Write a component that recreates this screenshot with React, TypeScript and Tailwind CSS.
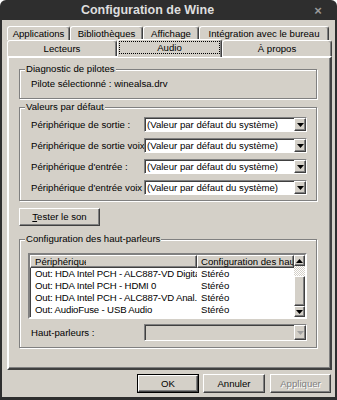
const raised =
  "border border-t-white border-l-white border-r-[#404040] border-b-[#404040] shadow-[inset_-1px_-1px_0_#808080]";
const sunken =
  "border border-t-[#808080] border-l-[#808080] border-r-white border-b-white shadow-[inset_1px_1px_0_#404040]";
const etched = "border border-[#808080] shadow-[inset_1px_1px_0_#fff,1px_1px_0_#fff]";
const tab =
  "h-full flex items-center justify-center whitespace-nowrap border-t border-l border-r border-t-white border-l-white border-r-[#404040] shadow-[inset_-1px_0_0_#808080] rounded-t-[3px]";

const Arrow = ({ up = false, color = "#000" }: { up?: boolean; color?: string }) => (
  <svg width="7" height="4" viewBox="0 0 7 4">
    <polygon points={up ? "0,4 7,4 3.5,0" : "0,0 7,0 3.5,4"} fill={color} />
  </svg>
);

const Combo = ({ disabled = false }: { disabled?: boolean }) => (
  <div
    className={`${sunken} flex items-stretch w-[163px] ${
      disabled ? "h-[17px] bg-[#d4d0c8]" : "h-[15px] bg-white"
    }`}
  >
    <div className="flex-1 pl-[2px] flex items-center whitespace-nowrap overflow-hidden">
      {disabled ? "" : "(Valeur par défaut du système)"}
    </div>
    <div className={`${raised} w-[12px] bg-[#d4d0c8] flex items-center justify-center`}>
      <Arrow color={disabled ? "#a0a0a0" : "#000"} />
    </div>
  </div>
);

const Group = ({ title, className, children }: { title: string; className: string; children: React.ReactNode }) => (
  <div className={`relative ${etched} ${className}`}>
    <span className="absolute -top-[7px] left-[5px] px-[1px] bg-[#d4d0c8] leading-[12px]">{title}</span>
    {children}
  </div>
);

const Button = ({ label, className }: { label: React.ReactNode; className: string }) => (
  <div className={`${raised} h-full flex items-center justify-center bg-[#d4d0c8] ${className}`}>{label}</div>
);

const devices = [
  "Out: HDA Intel PCH - ALC887-VD Digital",
  "Out: HDA Intel PCH - HDMI 0",
  "Out: HDA Intel PCH - ALC887-VD Anal...",
  "Out: AudioFuse - USB Audio",
];

const fields = [
  "Périphérique de sortie :",
  "Périphérique de sortie voix :",
  "Périphérique d'entrée :",
  "Périphérique d'entrée voix :",
];

export default function App() {
  return (
    <div className="w-[337px] h-[400px] bg-[#2e2e2e] rounded-t-[6px] overflow-hidden flex flex-col font-['Liberation_Sans',Arial,sans-serif] text-[9.6px] leading-[12px] text-black">
      <div className="h-[20px] flex items-center shrink-0">
        <div className="flex-1 text-center pl-[2px] pr-[20px] font-bold text-[12.5px] text-[#dedede]">
          Configuration de Wine
        </div>
        <div className="w-[10px] mr-[14px] text-[#9a9a9a] font-bold text-[13px] leading-[13px] text-center">×</div>
      </div>

      <div className="flex-1 mx-[2px] mb-[3px] bg-[#d4d0c8] pt-[6px] pl-[5px] flex flex-col">
        <div className="flex h-[14px]">
          <div className={`${tab} w-[63px]`}>Applications</div>
          <div className={`${tab} w-[73px]`}>Bibliothèques</div>
          <div className={`${tab} w-[56px]`}>Affichage</div>
          <div className={`${tab} w-[130px]`}>Intégration avec le bureau</div>
        </div>
        <div className="flex h-[16px] items-start relative z-10">
          <div className={`${tab} w-[110px]`}>Lecteurs</div>
          <div className="w-[105px] h-[18px] -mt-px bg-[#d4d0c8] border-t border-l border-r border-t-white border-l-white border-r-[#404040] shadow-[inset_-1px_0_0_#808080] rounded-t-[3px] p-px">
            <div className="h-[13px] border border-dotted border-black flex items-center justify-center">Audio</div>
          </div>
          <div className={`${tab} w-[110px]`}>À propos</div>
        </div>

        <div className={`h-[314px] w-[325px] ${raised} border-2 pt-[11px] pl-[10px] flex flex-col`}>
          <Group title="Diagnostic de pilotes" className="w-[298px] h-[30px] pt-[8px] pl-[11px]">
            Pilote sélectionné : winealsa.drv
          </Group>

          <Group title="Valeurs par défaut" className="w-[298px] h-[94px] mt-[8px] pt-[9px] pl-[11px] flex flex-col gap-[6px]">
            {fields.map((f) => (
              <div key={f} className="flex items-center h-[15px]">
                <div className="w-[113px] overflow-hidden whitespace-nowrap">{f}</div>
                <Combo />
              </div>
            ))}
          </Group>

          <div className="h-[18px] mt-[7px]">
            <Button
              className="w-[81px]"
              label={
                <span>
                  <span className="underline">T</span>ester le son
                </span>
              }
            />
          </div>

          <Group title="Configuration des haut-parleurs" className="w-[298px] h-[109px] mt-[13px] pt-[13px] pl-[8px]">
            <div className={`${sunken} border-2 w-[279px] h-[66px] bg-white flex`}>
              <div className="flex-1 flex flex-col overflow-hidden">
                <div className="flex h-[13px] bg-[#d4d0c8]">
                  <div className={`${raised} w-[167px] pl-[4px] flex items-center`}>
                    <span className="w-[51px] overflow-hidden whitespace-nowrap">Périphérique</span>
                  </div>
                  <div className={`${raised} flex-1 pl-[3px] flex items-center overflow-hidden whitespace-nowrap`}>
                    Configuration des haut-parleurs
                  </div>
                </div>
                {devices.map((d) => (
                  <div key={d} className="flex h-[12px] items-center whitespace-nowrap">
                    <div className="w-[167px] pl-[5px] overflow-hidden tracking-[-0.15px]">{d}</div>
                    <div className="pl-[4px]">Stéréo</div>
                  </div>
                ))}
              </div>
              <div className="w-[11px] flex flex-col">
                <div className={`${raised} h-[11px] bg-[#d4d0c8] flex items-center justify-center`}>
                  <Arrow up />
                </div>
                <div className="h-[10px] bg-[repeating-conic-gradient(#fff_0_25%,#d4d0c8_0_50%)] bg-[length:2px_2px]" />
                <div className={`${raised} flex-1 bg-[#d4d0c8]`} />
                <div className={`${raised} h-[11px] bg-[#d4d0c8] flex items-center justify-center`}>
                  <Arrow />
                </div>
              </div>
            </div>
            <div className="flex items-center mt-[5px] ml-[3px]">
              <div className="w-[113px]">Haut-parleurs :</div>
              <Combo disabled />
            </div>
          </Group>
        </div>

        <div className="flex h-[19px] mt-[4px] pl-[130px]">
          <div className="w-[62px] h-full border border-black">
            <Button className="w-full" label="OK" />
          </div>
          <div className="w-[62px] h-full ml-[4px]">
            <Button className="w-full" label="Annuler" />
          </div>
          <div className="w-[61px] h-full ml-[5px]">
            <Button className="w-full text-[#808080] [text-shadow:1px_1px_0_#fff]" label="Appliquer" />
          </div>
        </div>
      </div>
    </div>
  );
}
